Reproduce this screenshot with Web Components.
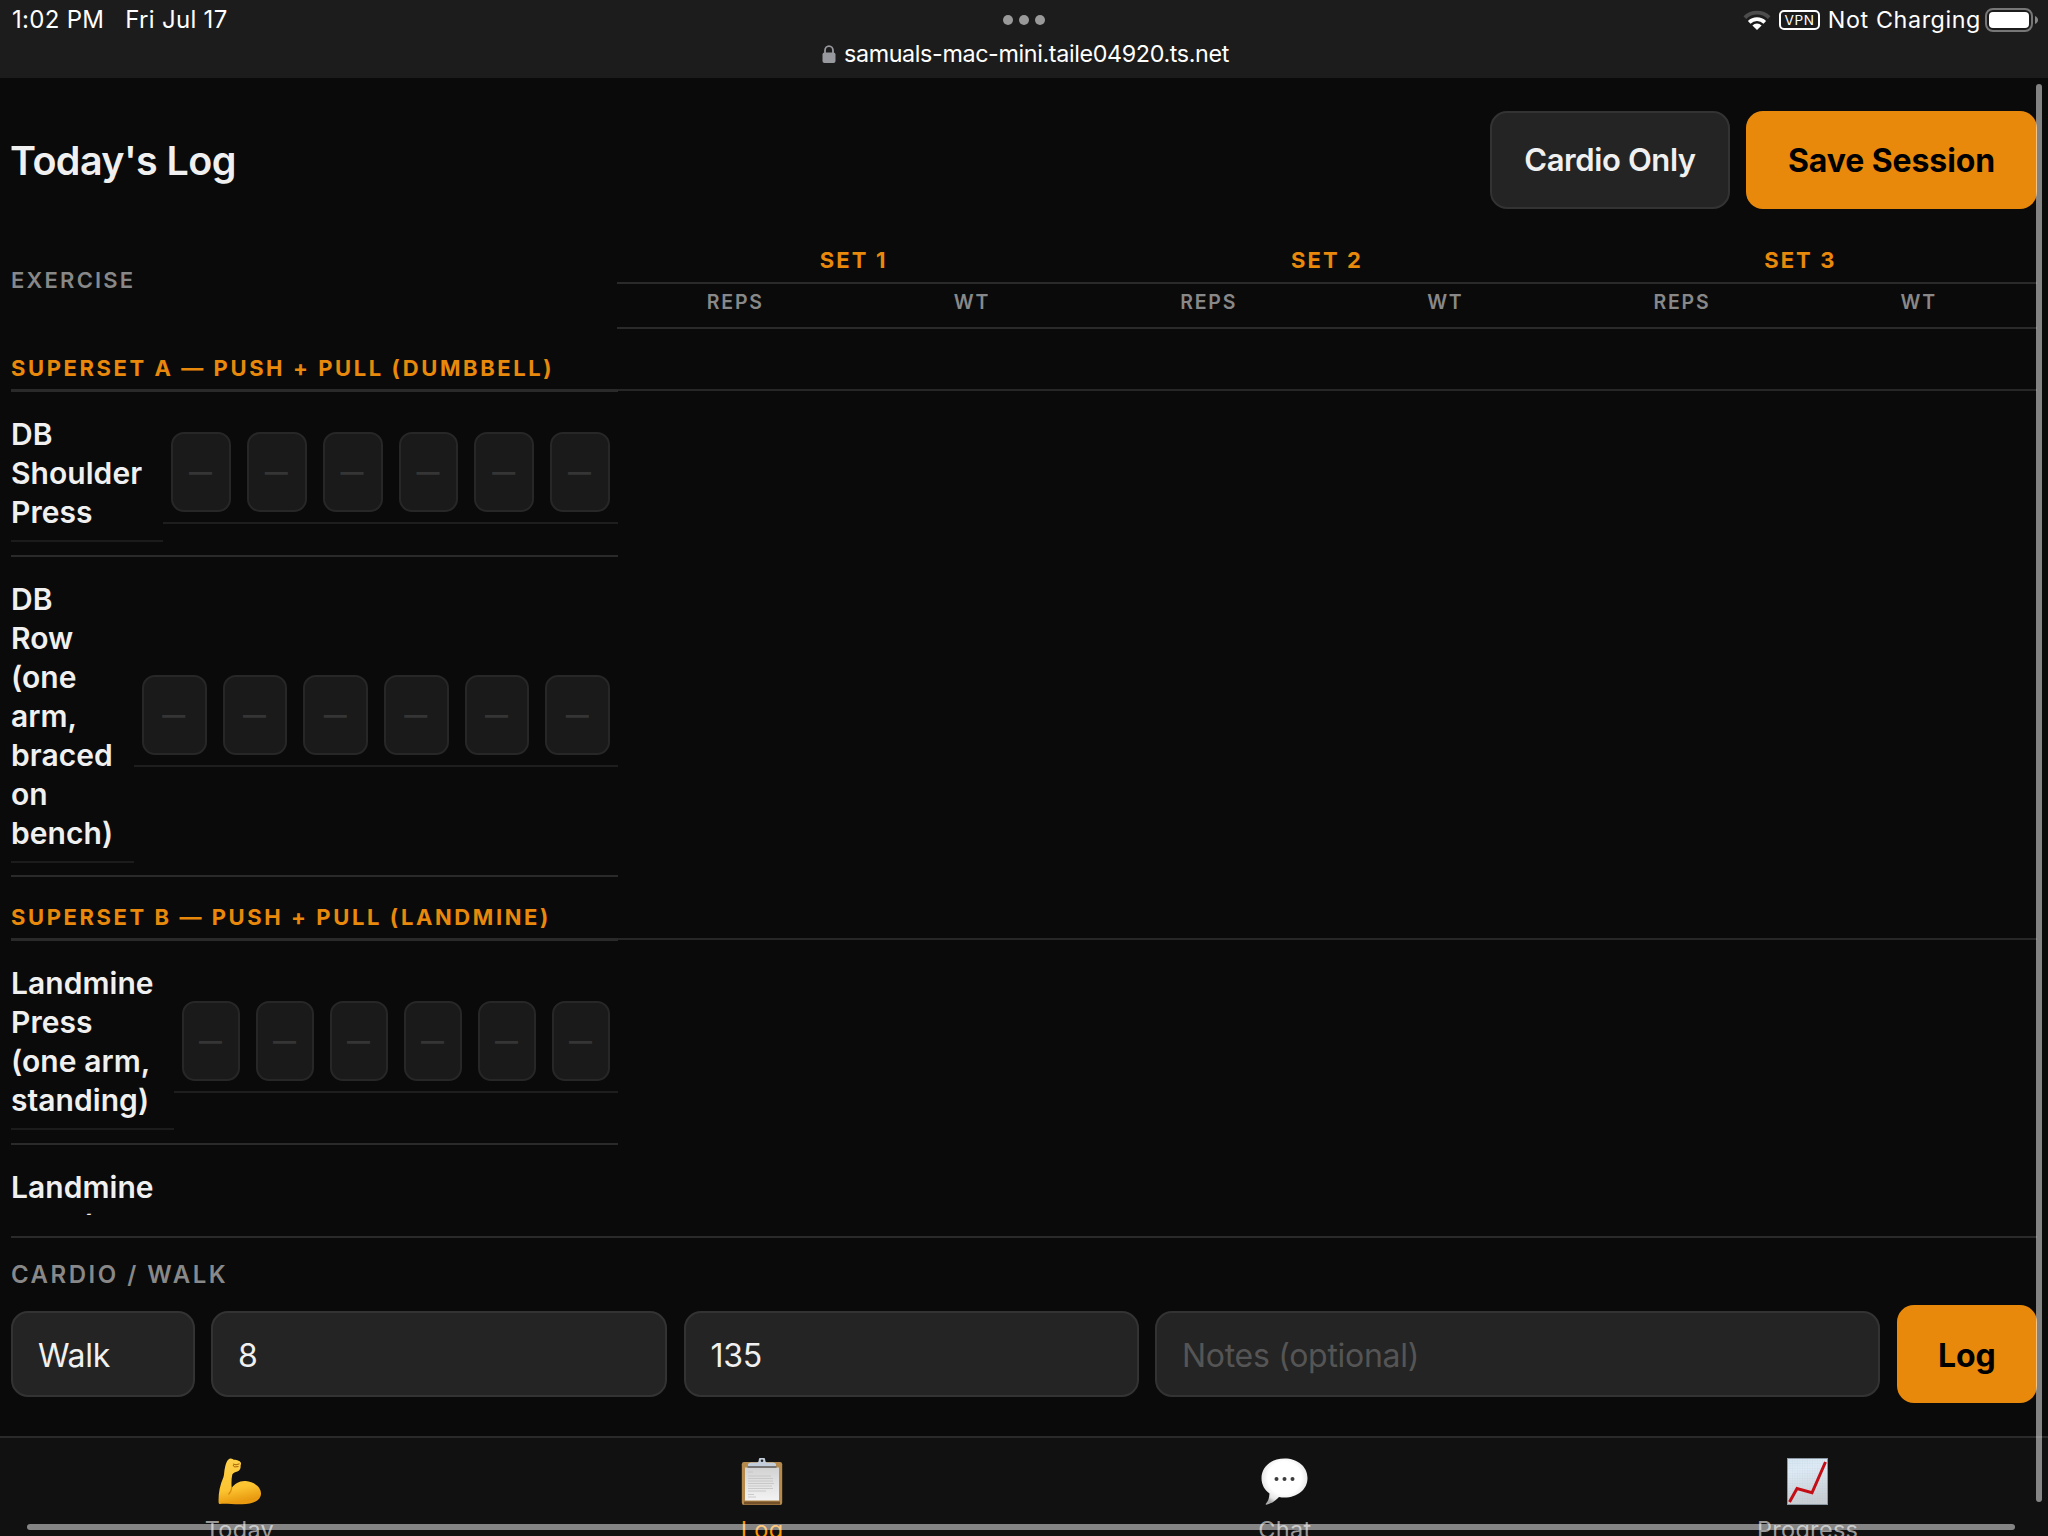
<!DOCTYPE html>
<html lang="en">
<head>
<meta charset="utf-8">
<title>Today's Log</title>
<style>
    html, body {
        margin: 0;
        height: 1536px;
        overflow: hidden;
        background: #0a0a0a;
    }
    body {
        --accent: #e8890c;
        --line: #2a2a2a;
        --muted: #888;
        --text: #f0f0f0;
        display: flex;
        flex-direction: column;
        position: relative;
        width: 2048px;
        color: var(--text);
        font-family: Inter, "Liberation Sans", sans-serif;
    }
    main {
        flex: 1;
        min-height: 0;
        display: flex;
        flex-direction: column;
        padding: 0 11px;
    }
</style>
</head>
<body>
    <status-bar></status-bar>
    <main>
        <page-header title-text="Today's Log">
            <action-button kind="secondary" style="width: 240px">Cardio Only</action-button>
            <action-button kind="primary" style="width: 291px">Save Session</action-button>
        </page-header>
        <log-table>
            <superset-heading>Superset A — Push + Pull (Dumbbell)</superset-heading>
            <exercise-row name-width="152" class="first">DB Shoulder Press</exercise-row>
            <exercise-row name-width="123">DB Row (one arm, braced on bench)</exercise-row>
            <superset-heading class="later">Superset B — Push + Pull (Landmine)</superset-heading>
            <exercise-row name-width="163" class="first">Landmine Press (one arm, standing)</exercise-row>
            <exercise-row name-width="163" cells="0">Landmine Row (one</exercise-row>
        </log-table>
        <cardio-form></cardio-form>
    </main>
    <tab-bar></tab-bar>
    <scroll-thumbs></scroll-thumbs>

<script>
class StatusBar extends HTMLElement {
    constructor() {
        super();
        this.attachShadow({ mode: 'open' });
    }

    connectedCallback() {
        this.shadowRoot.innerHTML = `
            <style>
                :host {
                    display: grid;
                    grid-template-columns: 1fr auto 1fr;
                    grid-template-rows: 40px 38px;
                    height: 78px;
                    background: #1c1c1c;
                    color: #fff;
                    font-size: 23.3px;
                    line-height: 28px;
                }
                svg { display: block; }
                .clock {
                    display: flex;
                    gap: 21px;
                    padding: 6px 0 0 12px;
                    font-size: 24px;
                    letter-spacing: .3px;
                }
                .clock span { white-space: nowrap; }
                .dots {
                    display: flex;
                    gap: 6px;
                    padding-top: 15px;
                }
                .dots i {
                    width: 10px;
                    height: 10px;
                    border-radius: 50%;
                    background: #999;
                }
                .system {
                    display: flex;
                    justify-content: flex-end;
                    padding: 6px 9px 0 0;
                }
                .vpn {
                    box-sizing: border-box;
                    width: 41px;
                    height: 20px;
                    margin: 4px 8px 0 8px;
                    border: 2px solid #fff;
                    border-radius: 5px;
                    font-size: 13.6px;
                    line-height: 16px;
                    text-align: center;
                    letter-spacing: .6px;
                    text-indent: .6px;
                }
                .charge {
                    margin-right: 4px;
                    letter-spacing: .6px;
                    white-space: nowrap;
                }
                .address {
                    grid-column: 1 / -1;
                    display: flex;
                    justify-content: center;
                    padding-left: 3px;
                    letter-spacing: -.36px;
                }
                .address svg { margin: 5px 8px 0 0; }
            </style>
            <div class="clock"><span>1:02 PM</span><span>Fri Jul 17</span></div>
            <div class="dots"><i></i><i></i><i></i></div>
            <div class="system">
                <svg width="28" height="22" viewBox="0 0 28 22" style="margin-top:3px" fill="none" stroke="#fff" stroke-width="3.8">
                    <path d="M1.8 8.6a17.6 17.6 0 0 1 24.4 0" stroke="#4c4c4c"/>
                    <path d="M6.2 13.3a11.4 11.4 0 0 1 15.6 0"/>
                    <path d="M14 21l-4.6-4.6a6.6 6.6 0 0 1 9.2 0z" fill="#fff" stroke="none"/>
                </svg>
                <span class="vpn">VPN</span>
                <span class="charge">Not Charging</span>
                <svg width="54" height="24" viewBox="0 0 54 24" style="margin-top:2px">
                    <rect x="1" y="1" width="46" height="22" rx="7" fill="none" stroke="#777" stroke-width="2"/>
                    <rect x="4" y="4" width="40" height="16" rx="4" fill="#fff"/>
                    <path d="M50 8c4 1.600 4 6.400 0 8z" fill="#888"/>
                </svg>
            </div>
            <div class="address">
                <svg width="14" height="18" viewBox="0 0 14 18">
                    <path d="M3 9V5.500a4 4.300 0 0 1 8 0V9" fill="none" stroke="#98989f" stroke-width="1.800"/>
                    <rect x=".5" y="7.500" width="13" height="10.500" rx="2" fill="#98989f"/>
                </svg>
                <span>samuals-mac-mini.taile04920.ts.net</span>
            </div>
        `;
    }
}

class ActionButton extends HTMLElement {
    constructor() {
        super();
        this.attachShadow({ mode: 'open' });
    }

    connectedCallback() {
        this.shadowRoot.innerHTML = `
            <style>
                :host {
                    box-sizing: border-box;
                    display: flex;
                    align-items: center;
                    justify-content: center;
                    height: 98px;
                    padding-top: 2px;
                    border-radius: 17px;
                    font-size: 32px;
                    white-space: nowrap;
                }
                :host([kind="primary"]) {
                    background: var(--accent);
                    color: #000;
                    font-weight: 700;
                    letter-spacing: -.1px;
                }
                :host([kind="secondary"]) {
                    padding: 0 0 0 1px;
                    background: #242424;
                    border: 2px solid #333;
                    color: var(--text);
                    font-size: 31px;
                    font-weight: 600;
                    letter-spacing: -.4px;
                }
            </style>
            <slot></slot>
        `;
    }
}

class PageHeader extends HTMLElement {
    constructor() {
        super();
        this.attachShadow({ mode: 'open' });
    }

    connectedCallback() {
        this.shadowRoot.innerHTML = `
            <style>
                :host {
                    display: flex;
                    align-items: center;
                    justify-content: space-between;
                    padding: 32.5px 0 23.5px;
                    flex: none;
                }
                h1 {
                    margin: 3px 0 0 -1px;
                    font-size: 39.5px;
                    font-weight: 600;
                    letter-spacing: -.6px;
                }
                .actions { display: flex; gap: 16.5px; }
            </style>
            <h1>${this.getAttribute('title-text')}</h1>
            <div class="actions"><slot></slot></div>
        `;
    }
}

class LogTable extends HTMLElement {
    constructor() {
        super();
        this.attachShadow({ mode: 'open' });
    }

    connectedCallback() {
        const sets = [1, 2, 3];
        this.shadowRoot.innerHTML = `
            <style>
                :host {
                    display: block;
                    flex: none;
                    height: 983px;
                    overflow: hidden;
                }
                .head {
                    display: grid;
                    grid-template-columns: 606px repeat(6, 1fr);
                    grid-template-rows: 52px 45px;
                    font-weight: 600;
                    text-align: center;
                }
                .head > div {
                    box-sizing: border-box;
                    display: flex;
                    align-items: center;
                    justify-content: center;
                }
                .head .exercise {
                    grid-row: span 2;
                    justify-content: flex-start;
                    padding-bottom: 2px;
                    color: var(--muted);
                    font-size: 22px;
                    letter-spacing: 2.200px;
                }
                .set {
                    grid-column: span 2;
                    padding-top: 6px;
                    border-bottom: 2px solid var(--line);
                    color: var(--accent);
                    font-size: 22px;
                    font-weight: 700;
                    letter-spacing: 2.100px;
                }
                .unit {
                    padding-bottom: 7px;
                    border-bottom: 2px solid var(--line);
                    color: var(--muted);
                    font-size: 19.500px;
                    letter-spacing: 1.800px;
                }
            </style>
            <div class="head">
                <div class="exercise">EXERCISE</div>
                ${sets.map(n => `<div class="set">SET ${n}</div>`).join('')}
                ${sets.map(() => `<div class="unit">REPS</div><div class="unit">WT</div>`).join('')}
            </div>
            <slot></slot>
        `;
    }
}

class SupersetHeading extends HTMLElement {
    constructor() {
        super();
        this.attachShadow({ mode: 'open' });
    }

    connectedCallback() {
        this.shadowRoot.innerHTML = `
            <style>
                :host {
                    display: flex;
                    flex-direction: column;
                    justify-content: flex-end;
                    height: 63px;
                    color: var(--accent);
                    font-size: 22px;
                    font-weight: 700;
                    line-height: 26px;
                    letter-spacing: 2.580px;
                    text-transform: uppercase;
                    white-space: nowrap;
                }
                :host(.later) { height: 64px; }
                .rule {
                    display: grid;
                    grid-template-columns: 607px 1fr;
                    margin-top: 8px;
                }
                .rule i { height: 3px; background: var(--line); }
                .rule i + i { height: 2px; background: #272727; }
            </style>
            <div><slot></slot></div>
            <div class="rule"><i></i><i></i></div>
        `;
    }
}

class ExerciseRow extends HTMLElement {
    constructor() {
        super();
        this.attachShadow({ mode: 'open' });
    }

    connectedCallback() {
        // reps + weight for each of the three sets
        const count = Number(this.getAttribute('cells') ?? 6);
        const cells = Array(count).fill('<div class="cell"><div class="input">—</div></div>').join('');
        this.shadowRoot.innerHTML = `
            <style>
                :host {
                    box-sizing: border-box;
                    display: grid;
                    grid-template-columns: ${this.getAttribute('name-width')}px 1fr;
                    align-items: center;
                    width: 607px;
                    padding: 12px 0;
                    border-bottom: 2px solid var(--line);
                }
                :host(.first) { padding-bottom: 13px; }
                .name {
                    padding: 11px 18px 8px 0;
                    border-bottom: 2px solid #1c1c1c;
                    font-size: 30px;
                    font-weight: 600;
                    line-height: 39px;
                    letter-spacing: .05px;
                }
                .cells {
                    display: grid;
                    grid-template-columns: repeat(6, 1fr);
                    border-bottom: 2px solid #1e1e1e;
                }
                .cells:empty { display: none; }
                .cell { padding: 10px 8px; }
                .input {
                    box-sizing: border-box;
                    height: 80px;
                    border: 2px solid #272727;
                    border-radius: 13px;
                    background: #1a1a1a;
                    color: #353535;
                    font-size: 23px;
                    font-weight: 700;
                    line-height: 76px;
                    text-align: center;
                    text-indent: -1px;
                }
            </style>
            <div class="name"><slot></slot></div>
            <div class="cells">${cells}</div>
        `;
    }
}

class FieldBox extends HTMLElement {
    constructor() {
        super();
        this.attachShadow({ mode: 'open' });
    }

    connectedCallback() {
        this.shadowRoot.innerHTML = `
            <style>
                :host {
                    box-sizing: border-box;
                    display: flex;
                    align-items: center;
                    height: 86px;
                    padding: 2px 26px 0 25px;
                    border: 2px solid #333;
                    border-radius: 17px;
                    background: #242424;
                    color: var(--text);
                    font-size: 32px;
                    letter-spacing: -.3px;
                    white-space: nowrap;
                }
                :host([placeholder]) { color: #555; }
            </style>
            <slot></slot>
        `;
    }
}

class CardioForm extends HTMLElement {
    constructor() {
        super();
        this.attachShadow({ mode: 'open' });
    }

    connectedCallback() {
        this.shadowRoot.innerHTML = `
            <style>
                :host {
                    display: block;
                    margin-top: 21px;
                    border-top: 2px solid var(--line);
                }
                h2 {
                    margin: 23px 0 16px;
                    color: var(--muted);
                    font-size: 24px;
                    font-weight: 600;
                    line-height: 28px;
                    letter-spacing: 2.500px;
                }
                .fields {
                    display: grid;
                    grid-template-columns: 183.500px 456px 455px 1fr 140.500px;
                    gap: 16.500px;
                    align-items: center;
                }
            </style>
            <h2>CARDIO / WALK</h2>
            <div class="fields">
                <field-box>Walk</field-box>
                <field-box>8</field-box>
                <field-box>135</field-box>
                <field-box placeholder>Notes (optional)</field-box>
                <action-button kind="primary">Log</action-button>
            </div>
        `;
    }
}

const ICONS = {
    arm: `
        <svg width="44" height="47" viewBox="0 0 44 47" style="margin-left: 2px">
            <defs>
                <linearGradient id="skin" x1="0" y1="0" x2=".2" y2="1">
                    <stop offset="0" stop-color="#ffd24d"/>
                    <stop offset=".7" stop-color="#fcc430"/>
                    <stop offset="1" stop-color="#e99a10"/>
                </linearGradient>
            </defs>
            <path d="M.6 44.500C.3 36 1.500 28 5.500 19c.8-2.500.6-6 1.500-9.500C8 5 9.500 1 12.500.6c1.500-.2 2.500 1 3.500 1.200 3 0 6.500 1.200 7 3.400.3 1.300-.6 1.800-.4 3 .2 2.300-.8 4.300-3.300 5.300-2 .9-3.800 1-5 3-.9 4-1 9-.6 13.500 3-4.500 8-7.500 14-7 8.500.7 15.300 6 15.300 12.500 0 7-8 10.800-19 10.800C15.500 46.500 8 45.500 2 46c-.9 0-1.400-.6-1.400-1.500z" fill="url(#skin)"/>
            <path d="M13.700 30c-.3 2.500-1.200 4.500-3.200 6.500" stroke="#d98a0c" stroke-width="1.300" fill="none"/>
            <path d="M15 6l3 .8 3.500-1M15 7l1.500 2 4-.5" stroke="#a8640a" stroke-width="1" fill="none"/>
        </svg>`,
    clipboard: `
        <svg width="42" height="47" viewBox="0 0 42 47">
            <defs>
                <linearGradient id="sheet" x1="0" y1="0" x2="0" y2="1">
                    <stop offset="0" stop-color="#d2d2d2"/>
                    <stop offset="1" stop-color="#f3f3f3"/>
                </linearGradient>
            </defs>
            <rect x=".8" y="4" width="40.400" height="43" rx="2.200" fill="#b58a4c"/>
            <path d="M3 43.500h36v3H3z" fill="#76522b"/>
            <path d="M4 9.500h34v33H4z" fill="url(#sheet)"/>
            <path d="M7 14h5M7 18h23M7 20.500h25M7 23h25M7 25.500h26M7 28h24M7 30.500h25M7 33h18M7 36.500h6M7 39h8" stroke="#c2c2c2" stroke-width=".8"/>
            <path d="M7 8.500V6.500C7 5 9 4.500 12 4.500h4c1 0 1.500-.8 1.700-2a3.300 3.300 0 0 1 6.600 0c.2 1.200.7 2 1.700 2h4c3 0 5 .5 5 2v2z" fill="#c4cedb"/>
            <circle cx="21" cy="2.800" r="1.300" fill="#222"/>
            <path d="M6.500 8h29v2h-29z" fill="#777674"/>
        </svg>`,
    bubble: `
        <svg width="47" height="47" viewBox="0 0 47 47">
            <defs>
                <radialGradient id="puff" cx=".5" cy=".42" r=".6">
                    <stop offset=".6" stop-color="#fff"/>
                    <stop offset=".85" stop-color="#e6e6e6"/>
                    <stop offset="1" stop-color="#a8a8a8"/>
                </radialGradient>
            </defs>
            <path d="M23.500.5C36.500.5 46.500 8.500 46.500 20S36.500 39.500 23.500 39.500c-1.800 0-3.800-.2-5.500-.6-3.500 3.600-7.500 6.800-12.500 7.800-.8.100-1-.6-.5-1.200 2.200-2.500 3.300-5.500 3.500-10C3.500 32 .5 26.500.5 20 .5 8.500 10.500.5 23.500.5z" fill="url(#puff)"/>
            <g fill="#3c3c3c"><circle cx="15.500" cy="21" r="2"/><circle cx="23.500" cy="21" r="2"/><circle cx="31.500" cy="21" r="2"/></g>
        </svg>`,
    chart: `
        <svg width="41" height="47" viewBox="0 0 41 47">
            <defs>
                <linearGradient id="paper" x1="0" y1="0" x2=".2" y2="1">
                    <stop offset="0" stop-color="#d7e6f2"/>
                    <stop offset=".3" stop-color="#dfecf7"/>
                    <stop offset="1" stop-color="#c9ced3"/>
                </linearGradient>
                <pattern id="mesh" width="2.500" height="2.500" patternUnits="userSpaceOnUse">
                    <path d="M0 0h2.500M0 0v2.500" stroke="#a9bccb" stroke-width=".7"/>
                </pattern>
            </defs>
            <rect width="41" height="47" fill="url(#paper)"/>
            <rect width="41" height="47" fill="url(#mesh)" opacity=".35"/>
            <rect x=".5" y=".5" width="40" height="46" fill="none" stroke="#8b97a3"/>
            <path d="M2.500 44L10 30.500l15 4.300L38.500 4" fill="none" stroke="#c40d14" stroke-width="3"/>
        </svg>`
};

class TabItem extends HTMLElement {
    constructor() {
        super();
        this.attachShadow({ mode: 'open' });
    }

    connectedCallback() {
        this.shadowRoot.innerHTML = `
            <style>
                :host {
                    flex: 1;
                    display: flex;
                    flex-direction: column;
                    align-items: center;
                    gap: 11px;
                    padding-top: 20px;
                    color: #999;
                    font-size: 23.500px;
                    line-height: 28px;
                    letter-spacing: .3px;
                }
                :host([active]) { color: #ff9500; }
                svg { display: block; }
            </style>
            ${ICONS[this.getAttribute('icon')]}
            <span><slot></slot></span>
        `;
    }
}

class TabBar extends HTMLElement {
    constructor() {
        super();
        this.attachShadow({ mode: 'open' });
    }

    connectedCallback() {
        this.shadowRoot.innerHTML = `
            <style>
                :host {
                    display: block;
                    flex: none;
                    box-sizing: border-box;
                    height: 100px;
                    overflow: hidden;
                    border-top: 2px solid #2a2a2a;
                    background: #111;
                }
                nav { display: flex; margin: 0 -21px 0 -22px; }
            </style>
            <nav>
                <tab-item icon="arm">Today</tab-item>
                <tab-item icon="clipboard" active>Log</tab-item>
                <tab-item icon="bubble">Chat</tab-item>
                <tab-item icon="chart">Progress</tab-item>
            </nav>
        `;
    }
}

class ScrollThumbs extends HTMLElement {
    constructor() {
        super();
        this.attachShadow({ mode: 'open' });
    }

    connectedCallback() {
        // overlay indicators, drawn on top of the page
        this.shadowRoot.innerHTML = `
            <style>
                :host { position: absolute; inset: 0; pointer-events: none; }
                i {
                    position: absolute;
                    border-radius: 3px;
                    background: rgba(255, 255, 255, .49);
                }
                .vertical { right: 6px; top: 84px; bottom: 34px; width: 6px; }
                .horizontal { left: 27px; right: 33px; bottom: 6px; height: 6px; }
            </style>
            <i class="vertical"></i>
            <i class="horizontal"></i>
        `;
    }
}

customElements.define('status-bar', StatusBar);
customElements.define('action-button', ActionButton);
customElements.define('page-header', PageHeader);
customElements.define('log-table', LogTable);
customElements.define('superset-heading', SupersetHeading);
customElements.define('exercise-row', ExerciseRow);
customElements.define('field-box', FieldBox);
customElements.define('cardio-form', CardioForm);
customElements.define('tab-item', TabItem);
customElements.define('tab-bar', TabBar);
customElements.define('scroll-thumbs', ScrollThumbs);
</script>
</body>
</html>
